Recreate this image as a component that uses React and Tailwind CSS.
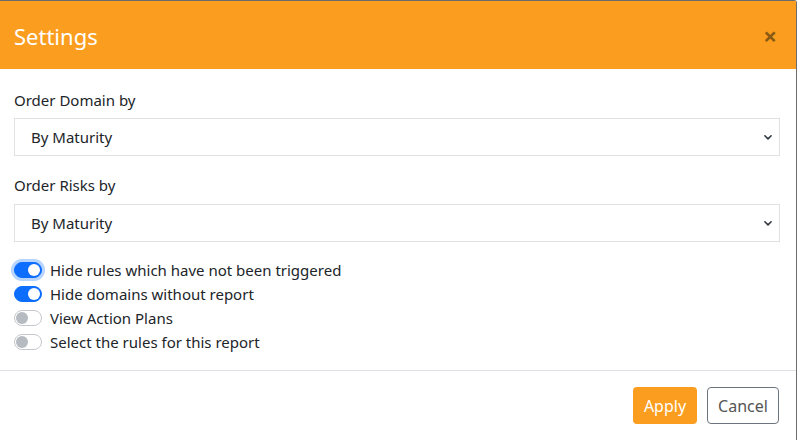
import React from "react";

function Toggle({ on, focus }) {
  return (
    <span
      className={`relative inline-flex h-[16px] w-[28px] shrink-0 items-center rounded-full border ${
        on ? "border-[#0d6efd] bg-[#0d6efd]" : "border-[#c4c8cc] bg-white"
      } ${focus ? "ring-[3px] ring-[#b6d4fe]" : ""}`}
    >
      <span
        className={`absolute top-[1px] h-[12px] w-[12px] rounded-full ${
          on ? "left-[13px] bg-white" : "left-[1px] bg-[#b5bbc1]"
        }`}
      />
    </span>
  );
}

function Select({ value }) {
  return (
    <div className="flex h-[38px] items-center justify-between border border-[#dfe2e5] bg-white pl-[16px] pr-[6px] text-[15px] text-[#212529]">
      <span>{value}</span>
      <svg width="10" height="10" viewBox="0 0 16 16" fill="none" stroke="#343a40" strokeWidth="2.6" strokeLinecap="round" strokeLinejoin="round">
        <path d="M3 6l5 5 5-5" />
      </svg>
    </div>
  );
}

export default function App() {
  const toggles = [
    ["Hide rules which have not been triggered", true, true],
    ["Hide domains without report", true, false],
    ["View Action Plans", false, false],
    ["Select the rules for this report", false, false],
  ];
  return (
    <div
      className="h-[440px] w-[797px] overflow-hidden bg-white"
      style={{ fontFamily: '"Noto Sans", "Open Sans", sans-serif' }}
    >
      <div className="h-full w-[797px] border-r border-t border-[#6b6b6b] rounded-tr-[3px]">
        <div className="flex h-[68px] items-center justify-between bg-[#fb9d1e] pl-[14px] pr-[19px]">
          <span className="pt-[2px] text-[22px] text-white">Settings</span>
          <span className="pt-[2px] text-[24px] font-bold leading-none text-[#8a5a14]">×</span>
        </div>
        <div className="border-b border-[#dee2e6] pl-[14px] pr-[16px] pt-[19px] pb-[16px]">
          <div className="text-[15px] leading-[24px] text-[#212529]">Order Domain by</div>
          <div className="mt-[6px]">
            <Select value="By Maturity" />
          </div>
          <div className="mt-[17px] text-[15px] leading-[24px] text-[#212529]">Order Risks by</div>
          <div className="mt-[7px]">
            <Select value="By Maturity" />
          </div>
          <div className="mt-[16px] flex flex-col">
            {toggles.map(([label, on, focus]) => (
              <div key={label} className="flex h-[24px] items-center gap-[8px] text-[15px] text-[#212529]">
                <Toggle on={on} focus={focus} />
                <span>{label}</span>
              </div>
            ))}
          </div>
        </div>
        <div className="flex justify-end gap-[10px] pl-[16px] pr-[17px] pt-[16px]">
          <button className="h-[37px] w-[64px] rounded-[4px] bg-[#fb9d1e] text-[16px] text-white">Apply</button>
          <button className="h-[37px] w-[72px] rounded-[4px] border border-[#6c757d] bg-white text-[16px] text-[#555]">Cancel</button>
        </div>
      </div>
    </div>
  );
}
